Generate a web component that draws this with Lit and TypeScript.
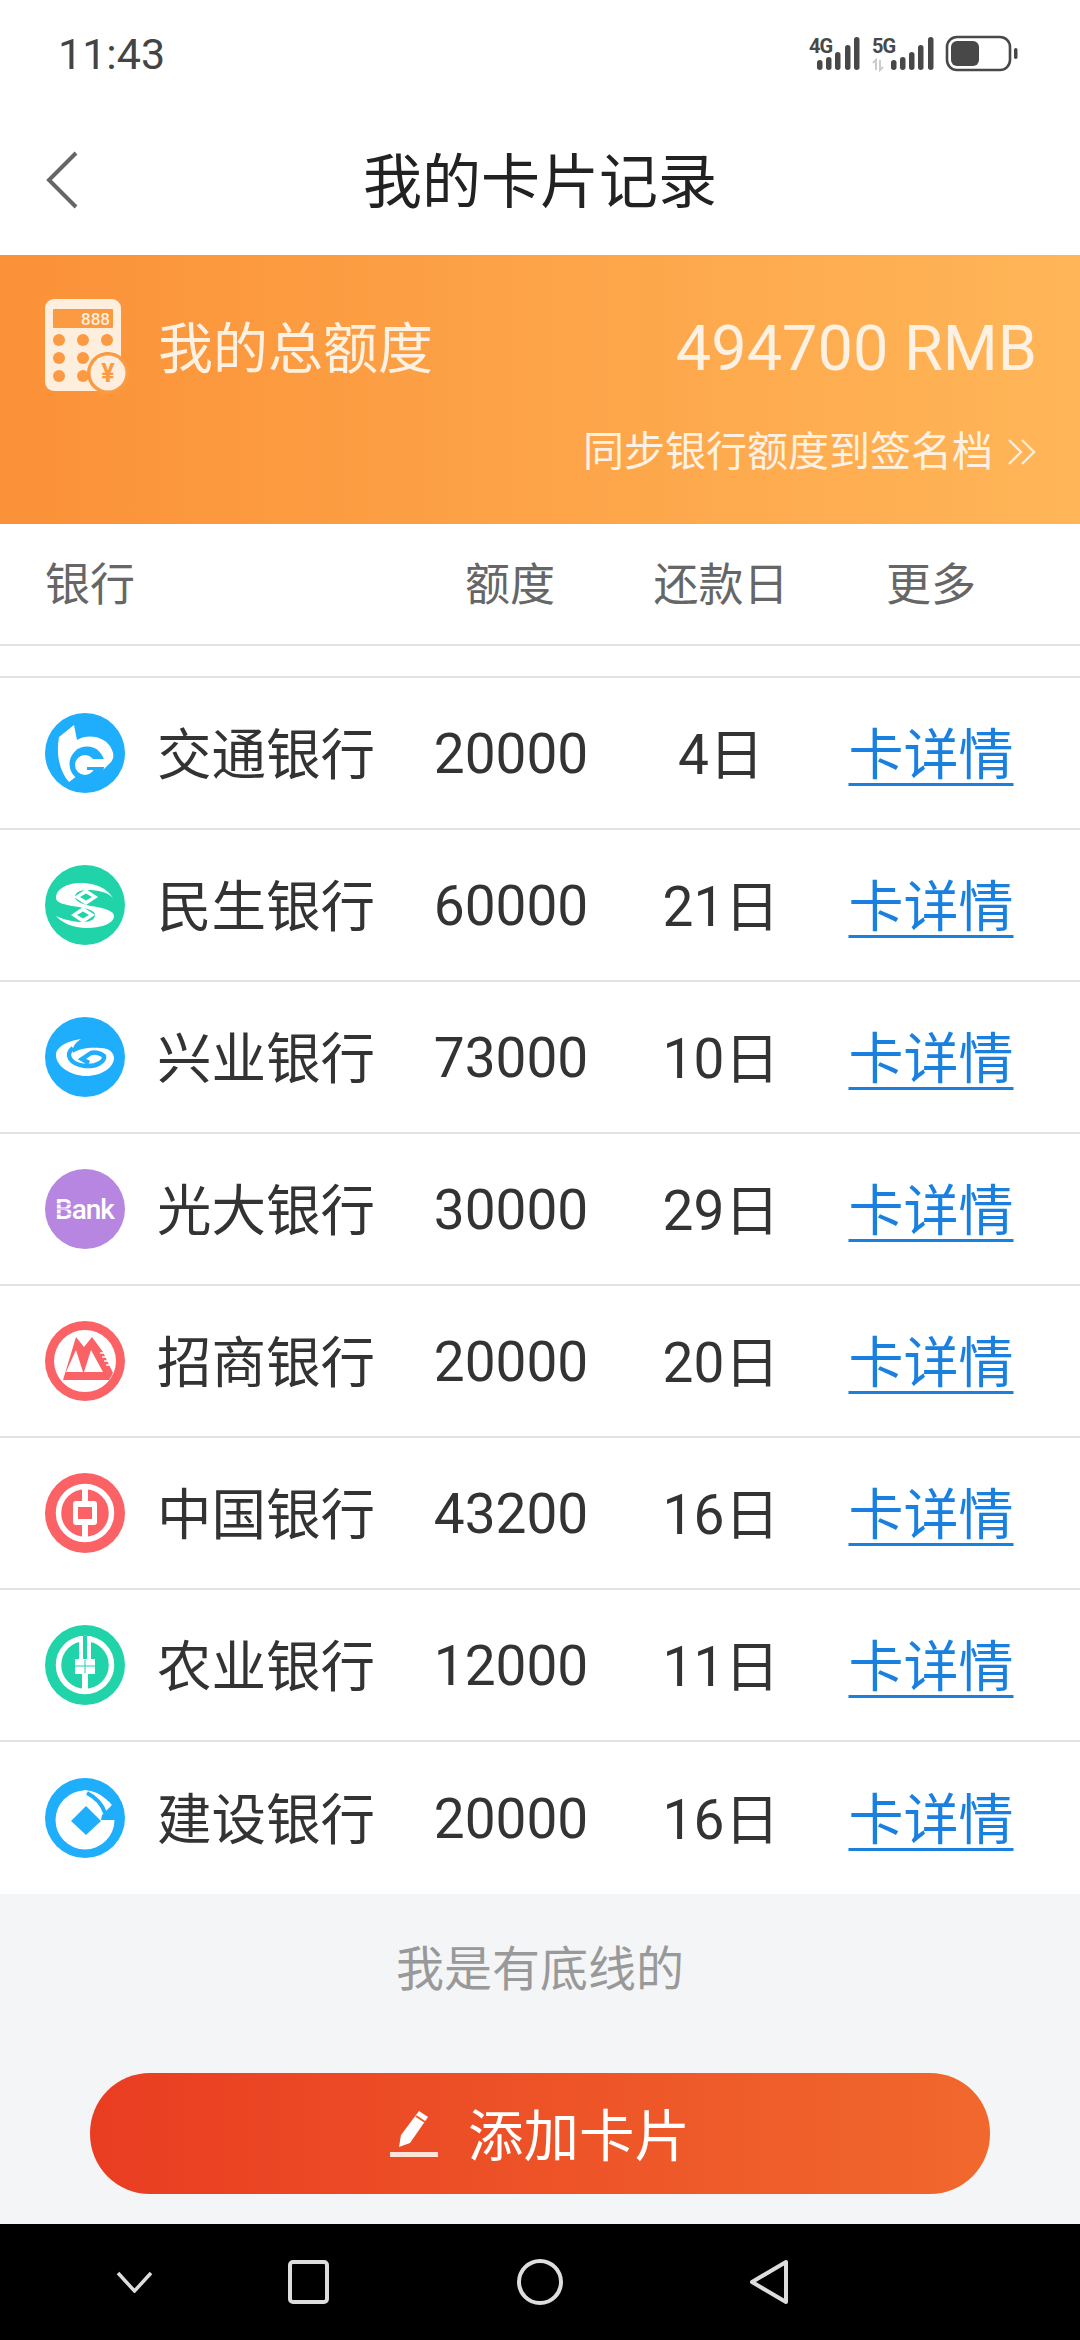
import { LitElement, css, html, svg } from "lit";
import { customElement } from "lit/decorators.js";

const BLUE = "#1faefc";
const GREEN = "#20d3a9";
const RED = "#fb6265";
const PURPLE = "#b686e0";

// Bank logos, all on an 80x80 canvas
const logos: Record<string, unknown> = {
  bocom: svg`
    <circle cx="40" cy="40" r="40" fill=${BLUE} />
    <path d="M29 12 L14 24 C11 40 14 58 24 69 L32 63 L42 55 L57 58 L66 49 C69 45 69 41 67 37 C62 24 44 20 32 27 Z" fill="#fff" />
    <circle cx="42" cy="51" r="17.500" fill=${BLUE} />
    <circle cx="40" cy="52" r="10" fill="#fff" />
    <rect x="42" y="46" width="18" height="8" fill="#fff" />
    <rect x="42" y="54" width="15" height="3" fill=${BLUE} />`,
  cmbc: svg`
    <circle cx="40" cy="40" r="40" fill=${GREEN} />
    <path d="M68 33 C62 26 50 25 42 25 C34 25 30 28 30 32 C30 36 36 39 46 41 C60 43 69 46 69 51 C69 59 55 63 42 63 C28 63 17 58 11 51 C20 55 30 57 38 57 C46 57 50 54 50 50 C50 46 44 44 34 42 C20 40 11 38 11 33 C11 24 22 18 36 18 C50 18 62 23 68 33 Z" fill="#fff" />
    <polygon points="41,24 53,32 41,40 29,32" fill="#fff" />
    <polygon points="41,28.500 47,32 41,35.500 35,32" fill=${GREEN} />
    <polygon points="38,42 50,50 38,58 26,50" fill="#fff" />
    <polygon points="38,46.500 44,50 38,53.500 32,50" fill=${GREEN} />`,
  cib: svg`
    <circle cx="40" cy="40" r="40" fill=${BLUE} />
    <path d="M36 22 C22 24 11 30 11 38 C11 50 27 59 41 59 C57 59 69 50 69 41 C69 35 63 31 56 31 C46 30 34 31 28 36 C27 30 30 26 36 22 Z" fill="#fff" />
    <path d="M28 31 C20 37 24 47 40 49 C52 50 60 44 59 39 C56 36 50 35 46 36 L37 42 L44 46" fill="none" stroke=${BLUE} stroke-width="4.500" />`,
  ceb: svg`
    <circle cx="40" cy="40" r="40" fill=${PURPLE} />
    <text x="10" y="50" font-family="Roboto, sans-serif" font-size="28" font-weight="500" fill="#fff" letter-spacing="-1">Bank</text>
    <path d="M10 35 H27 M10 40 H27 M10 45 H27" stroke=${PURPLE} stroke-width="1" />`,
  cmb: svg`
    <circle cx="40" cy="40" r="40" fill=${RED} />
    <circle cx="40" cy="40" r="31" fill="#fff" />
    <polygon points="31,16 39,26 47,16 58,31 68,52 64,59 18,59" fill=${RED} />
    <polygon points="31,29 38,51 21,51" fill="#fff" />
    <polygon points="46,29 58,51 39,51" fill="#fff" />
    <path d="M55 32 H68 M57 36 H69 M59 40 H69 M61 44 H69" stroke="#fff" stroke-width="1.600" />`,
  boc: svg`
    <circle cx="40" cy="40" r="40" fill=${RED} />
    <circle cx="40" cy="40" r="26.500" fill="none" stroke="#fff" stroke-width="5.500" />
    <rect x="37" y="14" width="6" height="52" fill="#fff" />
    <rect x="28" y="28" width="24" height="24" rx="3" fill="#fff" />
    <rect x="33" y="34" width="14" height="12" fill=${RED} />`,
  abc: svg`
    <circle cx="40" cy="40" r="40" fill=${GREEN} />
    <circle cx="40" cy="40" r="26.500" fill="none" stroke="#fff" stroke-width="5.500" />
    <rect x="34" y="11" width="12" height="28" fill="#fff" />
    <rect x="38" y="11" width="4" height="24" fill=${GREEN} />
    <rect x="30" y="34" width="20" height="15" fill="#fff" />
    <path d="M30 41 H50 M40 35 V49" stroke=${GREEN} stroke-width="1" />
    <rect x="37" y="48" width="6" height="20" fill="#fff" />`,
  ccb: svg`
    <circle cx="40" cy="40" r="40" fill=${BLUE} />
    <circle cx="40" cy="42" r="29.500" fill="#fff" />
    <path d="M38 12 C50 13 60 19 67 27 L60 35 Z" fill="#fff" />
    <polygon points="57,37 67,27 78,27 78,42 56,42" fill=${BLUE} />
    <path d="M42 15 C50 19 57 26 60 35" fill="none" stroke=${BLUE} stroke-width="4" />
    <polygon points="41,28 56,43 41,57 26,43" fill=${BLUE} />`,
};

const banks = [
  { logo: "bocom", name: "交通银行", limit: "20000", due: "4日" },
  { logo: "cmbc", name: "民生银行", limit: "60000", due: "21日" },
  { logo: "cib", name: "兴业银行", limit: "73000", due: "10日" },
  { logo: "ceb", name: "光大银行", limit: "30000", due: "29日" },
  { logo: "cmb", name: "招商银行", limit: "20000", due: "20日" },
  { logo: "boc", name: "中国银行", limit: "43200", due: "16日" },
  { logo: "abc", name: "农业银行", limit: "12000", due: "11日" },
  { logo: "ccb", name: "建设银行", limit: "20000", due: "16日" },
];

@customElement("app-root")
export class AppRoot extends LitElement {
  static styles = css`
    :host {
      display: flex;
      flex-direction: column;
      height: 2340px;
      background: #fff;
      font-family: Roboto, "Noto Sans CJK SC", sans-serif;
      color: #333;
    }
    .status {
      height: 105px;
      box-sizing: border-box;
      padding: 26px 0 0 58px;
      display: flex;
      justify-content: space-between;
      align-items: flex-start;
    }
    .time {
      font-size: 43px;
      line-height: 56px;
      color: #444;
    }
    .status-icons {
      display: block;
      margin-top: 6px;
    }
    .nav {
      height: 150px;
      box-sizing: border-box;
      padding-bottom: 6px;
      display: flex;
      align-items: center;
      justify-content: center;
      position: relative;
    }
    .back {
      position: absolute;
      left: 46px;
      top: 46px;
    }
    .title {
      font-size: 59px;
      color: #222;
    }
    .banner {
      height: 269px;
      box-sizing: border-box;
      padding: 44px 43px 0 45px;
      background: linear-gradient(90deg, #fb9138, #ffb658);
      color: #fdf1e3;
      display: flex;
      flex-direction: column;
    }
    .banner-top {
      display: flex;
      align-items: center;
      justify-content: space-between;
      height: 98px;
    }
    .banner-label {
      display: flex;
      align-items: center;
      gap: 28px;
      font-size: 55px;
    }
    .banner-label span {
      margin-bottom: 8px;
    }
    .amount {
      font-size: 63px;
    }
    .sync {
      margin-top: 25px;
      display: flex;
      justify-content: flex-end;
      align-items: center;
      gap: 14px;
      font-size: 41px;
      line-height: 60px;
    }
    .table-head {
      height: 122px;
      box-sizing: border-box;
      padding-bottom: 6px;
      border-bottom: 2px solid #e3e3e3;
      font-size: 45px;
      color: #666;
    }
    .grid {
      display: grid;
      grid-template-columns: 375px 180px 242px 178px;
      padding-left: 45px;
      align-items: center;
      text-align: center;
    }
    .grid > :first-child {
      text-align: left;
    }
    .list {
      margin-top: 30px;
      border-top: 2px solid #e3e3e3;
    }
    .row {
      height: 152px;
      box-sizing: border-box;
      border-bottom: 2px solid #e3e3e3;
      font-size: 55px;
    }
    .row:last-child {
      border-bottom: none;
    }
    .limit {
      padding: 2px 0 0 2px;
    }
    .bank {
      display: flex;
      align-items: center;
      gap: 32px;
      font-size: 54.5px;
    }
    .bank svg {
      flex: none;
    }
    .cjk {
      margin-bottom: 6px;
    }
    .link {
      color: #1a80e0;
      text-decoration: underline;
      text-decoration-thickness: 3px;
      text-underline-offset: 9px;
    }
    .footer {
      flex: 1;
      background: #f4f5f7;
      display: flex;
      flex-direction: column;
      align-items: center;
    }
    .end-note {
      margin-top: 44px;
      font-size: 48px;
      line-height: 64px;
      color: #999;
    }
    .add {
      margin-top: 71px;
      width: 900px;
      height: 121px;
      border-radius: 60px;
      background: linear-gradient(90deg, #e93d22, #f1682d);
      color: #fff;
      font-size: 55.5px;
      display: flex;
      align-items: center;
      justify-content: center;
      gap: 30px;
    }
    .add span {
      margin-bottom: 4px;
    }
    .sysbar {
      height: 116px;
      background: #000;
      display: flex;
      align-items: center;
      padding-left: 116px;
    }
    .sysbar svg {
      flex: none;
    }
    .gap-135 {
      margin-right: 135px;
    }
    .gap-188 {
      margin-right: 188px;
    }
    .gap-186 {
      margin-right: 186px;
    }
  `;

  renderStatusIcons() {
    const bars = (xs: number[]) =>
      xs.map((x, i) => {
        const top = [60, 57, 52, 45, 37][i];
        return svg`<rect x=${x - 809} y=${top - 32} width="5.500" height=${70 - top} rx="2.750" fill="#484848" />`;
      });
    return html`<svg class="status-icons" width="271" height="44" viewBox="0 0 271 44">
      <text x="0" y="21" font-family="Roboto, sans-serif" font-size="20" font-weight="700" fill="#484848" letter-spacing="-1">4G</text>
      ${bars([817, 826, 835, 845, 854])}
      <text x="63" y="21" font-family="Roboto, sans-serif" font-size="20" font-weight="700" fill="#484848" letter-spacing="-1">5G</text>
      <path d="M67 38 V28 L64 31 M71 28 V38 L74 35" fill="none" stroke="#ccc" stroke-width="2" />
      ${bars([891, 900, 909, 918, 928])}
      <rect x="138" y="5" width="63" height="33" rx="10" fill="none" stroke="#484848" stroke-width="2.600" />
      <rect x="142" y="9" width="28" height="25" rx="6" fill="#484848" />
      <rect x="205" y="16" width="3.500" height="11" rx="1.700" fill="#484848" />
    </svg>`;
  }

  renderCalculator() {
    return html`<svg width="85" height="98" viewBox="0 0 85 98">
      <rect x="0" y="0" width="76" height="92" rx="9" fill="#fdeedd" />
      <rect x="8" y="10" width="60" height="19" rx="1" fill="#fb9a42" />
      <text x="65" y="26" text-anchor="end" font-family="Roboto, sans-serif" font-size="17" font-weight="500" fill="#fdeedd">888</text>
      ${[14, 38, 62].flatMap((cx) =>
        [41, 59, 77].map((cy) => svg`<circle cx=${cx} cy=${cy} r="6" fill="#fb9a42" />`)
      )}
      <circle cx="63" cy="74" r="21" fill="#fb9a42" />
      <circle cx="63" cy="74" r="17.500" fill="#fdeedd" />
      <text x="63" y="83" text-anchor="middle" font-family="Roboto, sans-serif" font-size="25" font-weight="700" fill="#fb9a42">¥</text>
    </svg>`;
  }

  renderRow(b: (typeof banks)[number]) {
    return html`<div class="row grid">
      <div class="bank">
        <svg width="80" height="80" viewBox="0 0 80 80">${logos[b.logo]}</svg>
        <span class="cjk">${b.name}</span>
      </div>
      <div class="limit">${b.limit}</div>
      <div class="cjk">${b.due}</div>
      <div class="cjk"><span class="link">卡详情</span></div>
    </div>`;
  }

  render() {
    return html`
      <div class="status">
        <div class="time">11:43</div>
        ${this.renderStatusIcons()}
      </div>
      <div class="nav">
        <svg class="back" width="32" height="58" viewBox="0 0 32 58">
          <path d="M30 2 L3 29 L30 56" fill="none" stroke="#666" stroke-width="4" />
        </svg>
        <div class="title">我的卡片记录</div>
      </div>
      <div class="banner">
        <div class="banner-top">
          <div class="banner-label">
            ${this.renderCalculator()}
            <span>我的总额度</span>
          </div>
          <div class="amount">494700 RMB</div>
        </div>
        <div class="sync">
          <span>同步银行额度到签名档</span>
          <svg width="30" height="30" viewBox="0 0 30 30">
            <path d="M2 3 L14 15 L2 27 M15 3 L27 15 L15 27" fill="none" stroke="#fdeedd" stroke-width="2.400" />
          </svg>
        </div>
      </div>
      <div class="table-head grid">
        <div>银行</div>
        <div>额度</div>
        <div>还款日</div>
        <div>更多</div>
      </div>
      <div class="list">${banks.map((b) => this.renderRow(b))}</div>
      <div class="footer">
        <div class="end-note">我是有底线的</div>
        <div class="add">
          <svg width="48" height="48" viewBox="0 0 48 48">
            <path d="M9 37 L11 25 L29 1 L38 7 L20 33 Z" fill="#fff" />
            <path d="M26 6 L35 12" stroke="#ee5a28" stroke-width="2" />
            <rect x="0" y="42" width="48" height="5" fill="#fde3d8" />
          </svg>
          <span>添加卡片</span>
        </div>
      </div>
      <div class="sysbar">
        <svg class="gap-135" width="37" height="22" viewBox="0 0 37 22">
          <path d="M2 2 L18.500 20 L35 2" fill="none" stroke="#ddd" stroke-width="3.500" />
        </svg>
        <svg class="gap-188" width="41" height="44" viewBox="0 0 41 44">
          <rect x="2" y="2" width="37" height="40" rx="3" fill="none" stroke="#ddd" stroke-width="4" />
        </svg>
        <svg class="gap-186" width="46" height="46" viewBox="0 0 46 46">
          <circle cx="23" cy="23" r="21" fill="none" stroke="#ddd" stroke-width="4" />
        </svg>
        <svg width="40" height="46" viewBox="0 0 40 46">
          <path d="M37 3 V43 L3 23 Z" fill="none" stroke="#ddd" stroke-width="4" stroke-linejoin="round" />
        </svg>
      </div>
    `;
  }
}
